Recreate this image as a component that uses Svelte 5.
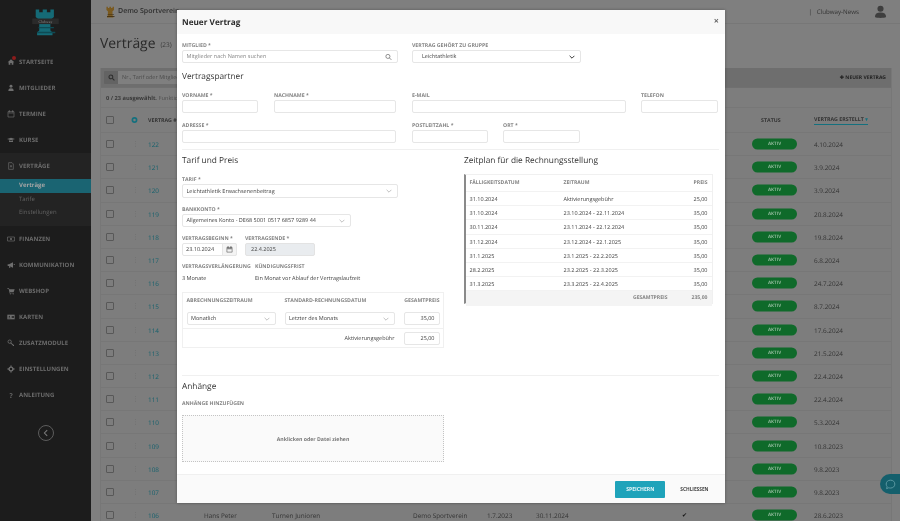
<script>
  const nav1 = [
    ['STARTSEITE','home'],['MITGLIEDER','user'],['TERMINE','cal'],['KURSE','cap']
  ];
  const nav2 = [
    ['FINANZEN','money'],['KOMMUNIKATION','mega'],['WEBSHOP','cart'],['KARTEN','card'],['ZUSATZMODULE','key'],['EINSTELLUNGEN','gear'],['ANLEITUNG','help']
  ];
  const rows = [
    [122,'4.10.2024'],[121,'3.9.2024'],[120,'3.9.2024'],[119,'20.8.2024'],[118,'19.8.2024'],[117,'6.8.2024'],
    [116,'24.7.2024'],[115,'8.7.2024'],[114,'17.6.2024'],[113,'21.5.2024'],[112,'22.4.2024'],[111,'22.4.2024'],
    [110,'5.3.2024'],[109,'10.8.2023'],[108,'9.8.2023'],[107,'9.8.2023'],[106,'28.6.2023']
  ];
  const plan = [
    ['31.10.2024','Aktivierungsgebühr','25,00'],
    ['31.10.2024','23.10.2024 - 22.11.2024','35,00'],
    ['30.11.2024','23.11.2024 - 22.12.2024','35,00'],
    ['31.12.2024','23.12.2024 - 22.1.2025','35,00'],
    ['31.1.2025','23.1.2025 - 22.2.2025','35,00'],
    ['28.2.2025','23.2.2025 - 22.3.2025','35,00'],
    ['31.3.2025','23.3.2025 - 22.4.2025','35,00']
  ];
</script>

{#snippet icon(name)}
  <svg class="nav-ic" viewBox="0 0 12 12" fill="#6e6e6e">
    {#if name==='home'}<path d="M6 2 1 6.500h1.500V10h2.500V7.500h2V10h2.500V6.500H11z"/>
    {:else if name==='user'}<circle cx="6" cy="3.500" r="2.200"/><path d="M2 10.500c0-3 1.500-4 4-4s4 1 4 4z"/>
    {:else if name==='cal'}<path d="M1.500 2.500h9v8h-9zM3 1h1v2H3zM8 1h1v2H8z" fill="none" stroke="#6e6e6e"/><path d="M2 4h8v1H2z"/>
    {:else if name==='cap'}<path d="M0 4.500 6 2.500l6 2-6 2zM3 6.500V9h6V6.500L6 7.500z"/>
    {:else if name==='doc'}<path d="M2.500 1h5l2 2v8h-7z" fill="none" stroke="#6e6e6e"/><path d="M5 5h2v3H5z"/>
    {:else if name==='money'}<path d="M.8 3h10.400v6H.8z" fill="none" stroke="#6e6e6e"/><circle cx="6" cy="6" r="1.500"/>
    {:else if name==='mega'}<path d="M1 5h2l6-3v8L3 7.500H1zM3 8h1.500l.5 2.500H3.500z"/><path d="M10 5h2v1h-2z"/>
    {:else if name==='cart'}<path d="M.5 2H3l.5 1.500h8L10 7.500H4.500l.3 1H10v.8H4L2.500 3H.5z"/><circle cx="5" cy="10.300" r=".9"/><circle cx="9.300" cy="10.300" r=".9"/>
    {:else if name==='card'}<path d="M.5 2.500h11v7H.5z"/><circle cx="3.500" cy="5" r="1" fill="#1c1c1c"/><path d="M2 8c0-1.500 3-1.500 3 0zM7 4.500h3.500v1H7zM7 6.500h3.500v1H7z" fill="#1c1c1c"/>
    {:else if name==='key'}<circle cx="4" cy="4" r="2.500" fill="none" stroke="#6e6e6e" stroke-width="1.200"/><path d="M6 5.500 10.500 9v1.500H9L8.500 9.500 5 6.500z"/>
    {:else if name==='gear'}<circle cx="6" cy="6" r="2.800" fill="none" stroke="#6e6e6e" stroke-width="2"/><path d="M5 .8h2v2H5zM5 9.200h2v2H5zM.8 5h2v2h-2zM9.200 5h2v2h-2z"/>
    {:else if name==='help'}<text x="6" y="10" font-size="10" font-weight="700" text-anchor="middle" font-family="Open Sans">?</text>
    {/if}
  </svg>
{/snippet}

{#snippet chev()}
  <svg class="chev" viewBox="0 0 10 6" fill="none" stroke="#999" stroke-width="1"><path d="M1 1l4 4 4-4"/></svg>
{/snippet}

{#snippet rook(fill, dark)}
  <path d="M5 2h5v4h5V2h6v4h5V2h5v11l-5 4v15l3 3v4H7v-4l3-3V17l-5-4z" fill={fill}/>
  <path d="M9 27h22v2H9zM7 34h26v2H7z" fill={dark}/>
{/snippet}

<div class="app">
  <aside class="side">
    <div class="logo">
      <svg viewBox="0 0 38 40" width="27" height="28">
        {@render rook('#156a76','#0f4a53')}
        <rect x="0" y="15" width="38" height="8" fill="#2a2a2a"/>
        <text x="19" y="21" font-size="5.500" text-anchor="middle" fill="#8a8a8a" font-family="Liberation Serif">Clubway</text>
      </svg>
    </div>
    <nav>
      {#each nav1 as [t,i]}
        <div class="nav">
          {@render icon(i)}<span>{t}</span>
          {#if i==='home'}<b class="dot"></b>{/if}
        </div>
      {/each}
      <div class="group">
        <div class="nav">{@render icon('doc')}<span>VERTRÄGE</span></div>
        <div class="sub active">Verträge</div>
        <div class="sub">Tarife</div>
        <div class="sub">Einstellungen</div>
      </div>
      {#each nav2 as [t,i]}
        <div class="nav">{@render icon(i)}<span>{t}</span></div>
      {/each}
    </nav>
    <div class="collapse">
      <svg viewBox="0 0 10 10" width="8" height="8" fill="none" stroke="#7a7a7a" stroke-width="1.300"><path d="M6.500 1.500 3 5l3.500 3.500"/></svg>
    </div>
  </aside>

  <main class="main">
    <header class="top">
      <svg viewBox="0 0 38 40" width="11" height="12">{@render rook('#7a5a20','#3a2a10')}</svg>
      <strong>Demo Sportverein</strong>
      <span class="news">|&nbsp;&nbsp; Clubway-News</span>
      <svg class="avatar" viewBox="0 0 14 14" width="13" height="13" fill="#3e3e3e"><circle cx="7" cy="4" r="3.300"/><path d="M1 13c0-3.500 2-5 6-5s6 1.500 6 5c-2 1.300-10 1.300-12 0z"/></svg>
    </header>
    <div class="title"><h1>Verträge</h1><small>(23)</small></div>
    <section class="card">
      <div class="tools">
        <span class="sbtn">
          <svg viewBox="0 0 12 12" width="7" height="7" fill="none" stroke="#2e2e2e" stroke-width="1.800"><circle cx="5" cy="5" r="3.300"/><path d="M7.500 7.500 11 11"/></svg>
        </span>
        <span class="sinput">Nr., Tarif oder Mitglied</span>
        <span class="new">✚ NEUER VERTRAG</span>
      </div>
      <div class="sel"><b>0 / 23 ausgewählt.</b> <span>Funktionen</span></div>
      <div class="tr thead">
        <i class="cb"></i>
        <svg class="cog" viewBox="0 0 10 10" width="7" height="7"><circle cx="5" cy="5" r="3" fill="none" stroke="#14707e" stroke-width="2.400"/></svg>
        <span class="c-no">VERTRAG #</span>
        <span class="c-st">STATUS</span>
        <span class="c-dt sorted">VERTRAG ERSTELLT <em>▾</em></span>
      </div>
      {#each rows as [n,d]}
        <div class="tr">
          <i class="cb"></i>
          <span class="dots">⋮</span>
          <span class="c-no link">{n}</span>
          {#if n===106}
            <span class="c1">Hans Peter</span><span class="c2">Turnen Junioren</span><span class="c3">Demo Sportverein</span>
            <span class="c4">1.7.2023</span><span class="c5">30.11.2024</span><span class="c6">✔</span>
          {/if}
          <span class="badge">AKTIV</span>
          <span class="c-dt">{d}</span>
        </div>
      {/each}
    </section>
  </main>

  <div class="chat">
    <svg viewBox="0 0 14 14" width="11" height="11" fill="none" stroke="#5f9aa4" stroke-width="1.200"><path d="M7 1.500c3.200 0 5.500 2 5.500 5s-2.300 5-5.500 5c-.8 0-1.500-.1-2.200-.4L2 12.300l.7-2.500C1.900 8.900 1.500 7.800 1.500 6.500c0-3 2.300-5 5.500-5z"/></svg>
  </div>

  <div class="modal">
    <div class="m-head"><h2>Neuer Vertrag</h2><span class="x">×</span></div>
    <div class="m-body">
      <div class="line first">
        <div class="f" style="width:216px"><label>MITGLIED *</label>
          <div class="in ph">Mitglieder nach Namen suchen
            <svg class="right" viewBox="0 0 12 12" width="7" height="7" fill="none" stroke="#666" stroke-width="1.200"><circle cx="5" cy="5" r="3.500"/><path d="M7.500 7.500 11 11"/></svg>
          </div>
        </div>
        <div class="f" style="width:169px;margin-left:14px"><label>VERTRAG GEHÖRT ZU GRUPPE</label>
          <div class="in val indent">Leichtathletik
            <svg class="right" viewBox="0 0 10 6" width="6" height="4" fill="none" stroke="#333" stroke-width="1.600"><path d="M1 1l4 4 4-4"/></svg>
          </div>
        </div>
      </div>

      <h3 class="h-partner">Vertragspartner</h3>

      <div class="line gap7">
        <div class="f" style="width:76px"><label>VORNAME *</label><div class="in"></div></div>
        <div class="f" style="width:122px;margin-left:16px"><label>NACHNAME *</label><div class="in"></div></div>
        <div class="f" style="width:214px;margin-left:16px"><label>E-MAIL</label><div class="in"></div></div>
        <div class="f" style="width:77px;margin-left:15px"><label>TELEFON</label><div class="in"></div></div>
      </div>
      <div class="line gap7">
        <div class="f" style="width:214px"><label>ADRESSE *</label><div class="in"></div></div>
        <div class="f" style="width:76px;margin-left:16px"><label>POSTLEITZAHL *</label><div class="in"></div></div>
        <div class="f" style="width:77px;margin-left:15px"><label>ORT *</label><div class="in"></div></div>
      </div>

      <hr class="hr1" />

      <div class="cols">
        <div class="left">
          <h3>Tarif und Preis</h3>
          <div class="f mt7" style="width:216px"><label>TARIF *</label>
            <div class="in val tall">Leichtathletik Erwachsenenbeitrag {@render chev()}</div></div>
          <div class="f mt6" style="width:169px"><label>BANKKONTO *</label>
            <div class="in val">Allgemeines Konto - DE68 5001 0517 6857 9289 44 {@render chev()}</div></div>
          <div class="line mt6">
            <div class="f" style="width:55px"><label>VERTRAGSBEGINN *</label>
              <div class="in val date">23.10.2024
                <span class="addon"><svg viewBox="0 0 12 12" width="7" height="7" fill="#555"><path d="M1.500 2.500h9v8h-9zM3 1h1v2H3zM8 1h1v2H8z" fill="none" stroke="#555"/><path d="M2 4h8v1.500H2z"/></svg></span>
              </div></div>
            <div class="f" style="width:70px;margin-left:8px"><label>VERTRAGSENDE *</label>
              <div class="in val dis">22.4.2025</div></div>
          </div>
          <div class="line mt6 info">
            <div style="width:73px"><label>VERTRAGSVERLÄNGERUNG</label><p>3 Monate</p></div>
            <div><label>KÜNDIGUNGSFRIST</label><p>Ein Monat vor Ablauf der Vertragslaufzeit</p></div>
          </div>
          <div class="box">
            <div class="bgrid bh">
              <label>ABRECHNUNGSZEITRAUM</label><label>STANDARD-RECHNUNGSDATUM</label><label class="rt">GESAMTPREIS</label>
            </div>
            <div class="bgrid br">
              <div class="in val">Monatlich {@render chev()}</div>
              <div class="in val">Letzter des Monats {@render chev()}</div>
              <div class="in val num">35,00</div>
            </div>
            <div class="bgrid br2">
              <span class="act">Aktivierungsgebühr</span>
              <div class="in val num">25,00</div>
            </div>
          </div>
        </div>
        <div class="rightc">
          <h3>Zeitplan für die Rechnungsstellung</h3>
          <div class="plan">
            <div class="pr ph-row"><span>FÄLLIGKEITSDATUM</span><span>ZEITRAUM</span><span class="rt">PREIS</span></div>
            {#each plan as [a,b,c]}
              <div class="pr"><span>{a}</span><span>{b}</span><span class="rt">{c}</span></div>
            {/each}
            <div class="pr total"><span></span><span class="rt tl">GESAMTPREIS</span><span class="rt">235,00</span></div>
          </div>
        </div>
      </div>

      <hr class="hr2" />

      <h3>Anhänge</h3>
      <label class="att">ANHÄNGE HINZUFÜGEN</label>
      <div class="drop">Anklicken oder Datei ziehen</div>
    </div>
    <div class="m-foot">
      <button class="save">SPEICHERN</button>
      <button class="close">SCHLIESSEN</button>
    </div>
  </div>
</div>

<style>
  :global(body){margin:0;background:#7f7f7f;font-family:"Open Sans",sans-serif;text-rendering:geometricPrecision}
  .app{position:relative;width:900px;height:521px;overflow:hidden;display:flex;background:#7f7f7f;color:#333;filter:blur(.3px)}
  label{display:block;font-size:5.200px;line-height:8px;font-weight:700;color:#858585;white-space:nowrap}
  h1,h2,h3,p{margin:0;font-weight:400}

  .side{width:91px;flex:none;background:#1c1c1c;display:flex;flex-direction:column}
  .logo{height:49px;display:flex;justify-content:center;align-items:flex-start;padding-top:8px;box-sizing:border-box}
  .nav{position:relative;height:26px;display:flex;align-items:center;padding-left:7px;gap:4px;font-size:6px;font-weight:700;color:#6c6c6c;letter-spacing:.05px;box-sizing:border-box}
  .nav-ic{width:8px;height:8px;flex:none}
  .dot{position:absolute;left:12px;top:7px;width:4px;height:4px;border-radius:50%;background:#8c1c1c}
  .group{background:#232323;padding-bottom:6px}
  .sub{height:13.500px;line-height:13.500px;padding-left:19px;font-size:6px;color:#626262}
  .sub.active{background:#1a6472;color:#a5a5a5;font-weight:700}
  .collapse{margin:17px auto 0;width:14px;height:14px;border:1px solid #5c5c5c;border-radius:50%;display:flex;align-items:center;justify-content:center}

  .main{flex:1;min-width:0;padding:0 8px 0 9px}
  .top{height:24px;display:flex;align-items:center;gap:2px;margin:0 -8px 0 -9px;padding:0 13px 0 14px;border-bottom:1px solid #777;box-sizing:border-box;font-size:7px}
  .top strong{font-weight:600;color:#2e2e2e;font-size:7px}
  .news{margin-left:auto;color:#333;font-size:6.200px;margin-right:13px}
  .title{height:44px;display:flex;align-items:center;gap:5px;padding-bottom:6px;box-sizing:border-box}
  h1{font-size:13.900px;color:#2a2a2a}
  .title small{font-size:6.500px;color:#3a3a3a;margin-top:3px}
  .card{border:1px solid #777;border-top:none;background:#7d7d7d}
  .tools{height:20px;background:#6e6e6e;display:flex;align-items:center;padding:0 5px 0 3px;border-bottom:1px solid #707070;box-sizing:border-box;font-size:5.500px;position:relative}
  .sbtn{width:14px;height:13px;background:#636363;display:flex;align-items:center;justify-content:center;border-radius:1px 0 0 1px}
  .sinput{width:100px;height:13px;line-height:13px;background:#7f7f7f;padding-left:4px;color:#4e4e4e}
  .new{margin-left:auto;font-weight:700;color:#222;font-size:5px}
  .sel{height:20px;line-height:20px;padding-left:5px;font-size:5.700px;color:#4f4f4f;border-bottom:1px solid #777;box-sizing:border-box}
  .sel b{color:#3a3a3a}
  .tr{position:relative;height:23.200px;border-bottom:1px solid #777;box-sizing:border-box;font-size:6.400px;color:#333}
  .tr.thead{height:25px}
  .tr>*{position:absolute;top:50%;transform:translateY(-50%);white-space:nowrap}
  .cb{left:5px;width:6px;height:6px;border:1px solid #585858;border-radius:1px}
  .cog{left:30px}
  .dots{left:31px;color:#6c6c6c;font-size:7px}
  .c-no{left:47px}
  .thead span{font-size:5.300px;font-weight:700;color:#333}
  .link{color:#15616d;font-size:6.400px}
  .c-st{left:660px}
  .c-dt{left:713px}
  .sorted{border-bottom:1px solid #14707e;padding-bottom:1px}
  .sorted em{color:#14707e;font-style:normal;font-size:5px}
  .badge{left:651px;width:45px;height:11px;line-height:11px;text-align:center;border-radius:6px;background:#0f6a2a;color:#8fb89a;font-size:4.500px;font-weight:700}
  .c1{left:103px}.c2{left:171px}.c3{left:312px}.c4{left:386px}.c5{left:435px}.c6{left:581px;color:#111;font-size:6px}

  .chat{position:absolute;right:0;top:474px;width:20px;height:20px;background:#145f6c;border-radius:10px 0 0 10px;display:flex;align-items:center;justify-content:center}

  .modal{position:absolute;left:176.500px;top:10px;width:548.500px;height:493px;background:#fff;display:flex;flex-direction:column;box-shadow:0 0 3px rgba(0,0,0,.3)}
  .m-head{height:24px;flex:none;background:#f8f8f8;display:flex;align-items:center;justify-content:space-between;padding:0 6px 0 5.500px;box-sizing:border-box}
  .m-head h2{font-size:8.200px;font-weight:700;color:#2b2b2b}
  .x{font-size:9px;color:#666;font-weight:700;line-height:1;margin-bottom:4px}
  .m-body{flex:1;padding:6px 6.500px 0 5.500px;min-height:0}
  .m-foot{height:29px;flex:none;background:#fafafa;border-top:1px solid #f0f0f0;box-sizing:border-box;display:flex;align-items:center;justify-content:flex-end;padding-right:16.500px;gap:15px}
  .line{display:flex}
  .f label{padding-top:.5px;height:9px;box-sizing:border-box;margin-bottom:1px}
  .in{position:relative;height:13px;box-sizing:border-box;border:1px solid #e6e6e6;border-radius:2px;background:#fff;font-size:5.500px;line-height:11px;padding-left:3.500px;white-space:nowrap}
  .ph{color:#858585}
  .val{color:#444}
  .indent{padding-left:9px}
  .tall{height:14px;line-height:12px}
  .right,.chev{position:absolute;right:5px;top:50%;transform:translateY(-50%)}
  .chev{width:6px;height:4px}
  .dis{background:#e9ecef;border-color:#e3e3e3;padding-left:5px}
  .date{padding-left:3px}
  .addon{position:absolute;right:-1px;top:-1px;bottom:-1px;width:13px;border:1px solid #e6e6e6;border-radius:0 2px 2px 0;background:#f4f4f4;display:flex;align-items:center;justify-content:center}
  h3{font-size:8.300px;line-height:14px;color:#333;position:relative;top:.5px}
  .h-partner{margin-top:6px}
  .gap7{margin-top:7px}
  .hr1{border:none;border-top:1px solid #f0f0f0;margin:6px 0 3px}
  .hr2{border:none;border-top:1px solid #f0f0f0;margin:0 0 3px}
  .cols{display:flex;gap:20px;height:222px}
  .left{width:262px;flex:none}
  .mt7{margin-top:7px}
  .mt6{margin-top:6px}
  .info p{font-size:5.500px;line-height:12px;color:#444;margin-top:2px}
  .box{margin-top:8px;height:56px;border:1px solid #f0f0f0;box-sizing:border-box;padding:0 4px 0 3.500px}
  .bgrid{display:grid;grid-template-columns:89px 110px 36px;column-gap:9px}
  .bh{height:19px;padding-bottom:5px;box-sizing:border-box;align-items:center}
  .bh label{margin:0}
  .rt{text-align:right}
  .br{height:17px;position:relative}
  .br::after{content:"";position:absolute;left:-4px;right:-4px;bottom:0;border-bottom:1px solid #f0f0f0}
  .br2{grid-template-columns:208px 36px;padding-top:3px}
  .num{text-align:right;padding-right:4px}
  .act{font-size:5.500px;color:#444;text-align:right;line-height:13px}
  .rightc{flex:1;min-width:0;padding-right:5px}
  .plan{margin-top:7px;border:1px solid #f0f0f0;border-left:2px solid #8a8a8a;width:249px;box-sizing:border-box;height:130px}
  .pr{display:grid;grid-template-columns:94px 1fr 40px;height:14.200px;line-height:14px;padding:0 4.500px 0 3.500px;border-bottom:1px solid #f2f2f2;box-sizing:border-box;font-size:5.500px;color:#444}
  .ph-row{height:17px;line-height:17px;font-size:5.100px;font-weight:700;color:#858585}
  .total{background:#f4f4f4;border:none;font-size:5.100px;font-weight:700;color:#858585}
  .att{margin-top:6px}
  .drop{margin-top:8px;width:262px;height:47px;box-sizing:border-box;border:1px dotted #c4c4c4;background:#fafafa;display:flex;align-items:center;justify-content:center;font-size:5.200px;font-weight:700;color:#777}
  button{font-family:inherit;border:none;cursor:pointer}
  .save{width:50px;height:17px;background:#1fa3ba;color:#e8f6f9;border-radius:1px;font-size:5.100px;font-weight:700}
  .close{background:none;color:#444;font-size:4.800px;font-weight:700;padding:0}
</style>
